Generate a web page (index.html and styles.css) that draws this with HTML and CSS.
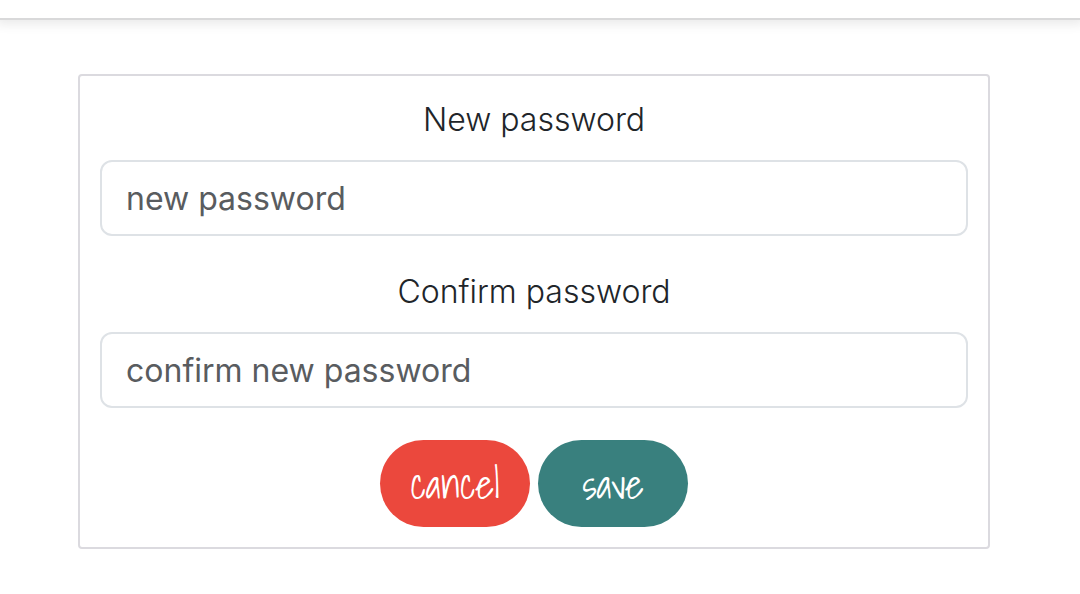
FILE: index.html
```
<!DOCTYPE html>
<html lang="en">
<head>
<meta charset="utf-8">
<title>Change password</title>
<link rel="stylesheet" href="styles.css">
</head>
<body>
<header class="topbar"></header>
<main class="page">
<form class="card">
<div class="field">
<label class="label" for="new-password">New password</label>
<input class="input" id="new-password" type="password" placeholder="new password">
</div>
<div class="field">
<label class="label" for="confirm-password">Confirm password</label>
<input class="input" id="confirm-password" type="password" placeholder="confirm new password">
</div>
<div class="actions">
<button class="button cancel" type="button">cancel</button>
<button class="button save" type="submit">save</button>
</div>
</form>
</main>
</body>
</html>
```
FILE: styles.css
```
* {
  box-sizing: border-box;
}

body {
  margin: 0;
  background: #fff;
  color: #212529;
  font-family: Inter, "Liberation Sans", sans-serif;
  font-size: 32px;
  line-height: 48px;
}

.topbar {
  height: 20px;
  border-bottom: 2px solid #d9d9da;
  box-shadow: 0 0 12px 4px rgba(0, 0, 0, 0.09);
  background: #fff;
}

.page {
  padding: 54px 90px 44px 78px;
}

.card {
  display: flex;
  flex-direction: column;
  gap: 32px;
  padding: 20px;
  border: 2px solid #dbdadf;
  border-radius: 4px;
}

.field {
  display: flex;
  flex-direction: column;
  gap: 16px;
}

.label {
  text-align: center;
  font-weight: 300;
}

.input {
  width: 100%;
  height: 76px;
  padding: 12px 24px;
  border: 2px solid #dee2e6;
  border-radius: 12px;
  background: #fff;
  color: #212529;
  font: inherit;
}

.input::placeholder {
  color: #595c5f;
  opacity: 1;
}

.actions {
  display: flex;
  justify-content: center;
  gap: 8px;
}

.button {
  width: 150px;
  height: 87px;
  padding: 0;
  border: 0;
  border-radius: 44px;
  color: #fff;
  font-family: "Shadows Into Light", "Nanum Pen Script", cursive;
  font-size: 40px;
}

.cancel {
  background: #eb483d;
}

.save {
  background: #39807e;
}
```
